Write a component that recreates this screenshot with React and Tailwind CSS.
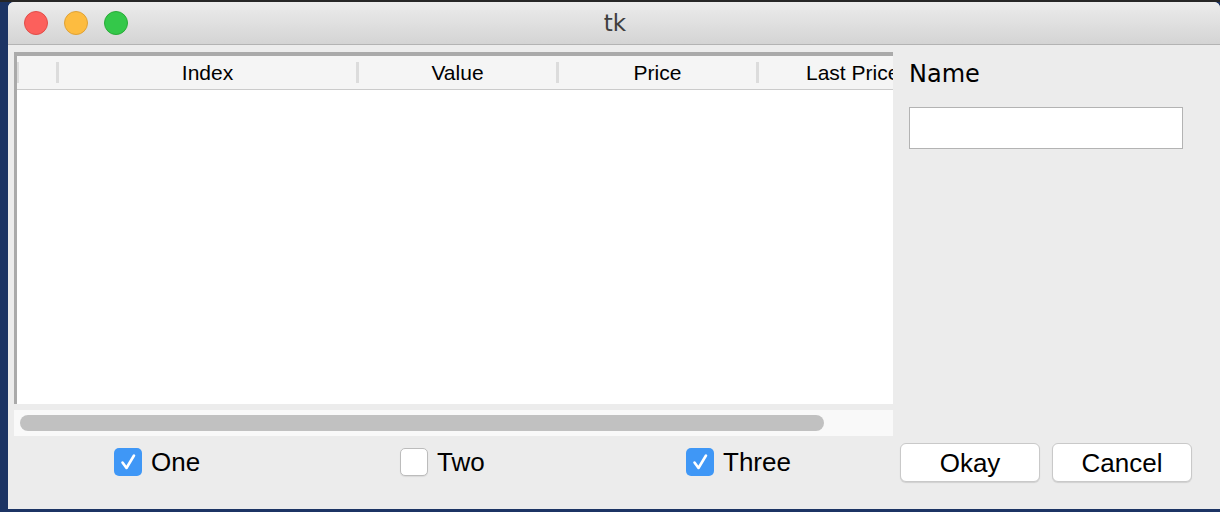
import React from "react";

const sans = { fontFamily: '"Liberation Sans", Arial, sans-serif' };
const lucida = { fontFamily: '"DejaVu Sans", "Liberation Sans", sans-serif' };

function Light({ fill, ring }) {
  return (
    <div
      className="w-[24px] h-[24px] rounded-full border"
      style={{ backgroundColor: fill, borderColor: ring }}
    />
  );
}

function Sep() {
  return <div className="w-[3px] h-[21px] bg-[#dcdcdc] shrink-0" />;
}

function HeaderCell({ width, label }) {
  return (
    <div
      className="shrink-0 h-full flex items-center justify-center text-[21px] text-black whitespace-nowrap"
      style={{ width }}
    >
      {label}
    </div>
  );
}

function Check({ checked, label, last }) {
  return (
    <div className={last ? "shrink-0 flex items-center gap-[9px]" : "w-[286px] shrink-0 flex items-center gap-[9px]"}>
      {checked ? (
        <div className="w-[28px] h-[28px] rounded-[5px] bg-[#3f97f6] flex items-center justify-center">
          <svg width="28" height="28" viewBox="0 0 28 28">
            <path
              d="M8.5 14.5 L12.5 20 L20 7.5"
              fill="none"
              stroke="white"
              strokeWidth="2.6"
              strokeLinecap="round"
              strokeLinejoin="round"
            />
          </svg>
        </div>
      ) : (
        <div className="w-[28px] h-[28px] rounded-[5px] bg-white border border-[#bcbcbc] shadow-[0_1px_1px_rgba(0,0,0,0.08)]" />
      )}
      <span className="text-[26px] text-black leading-none">{label}</span>
    </div>
  );
}

function Button({ label }) {
  return (
    <button className="w-[140px] h-[39px] bg-white rounded-[6px] border border-[#c9c9c9] shadow-[0_1px_1px_rgba(0,0,0,0.12)] text-[26px] text-black leading-none flex items-center justify-center">
      {label}
    </button>
  );
}

export default function App() {
  return (
    <div className="w-[1220px] h-[512px] bg-[#1c3464] flex flex-col overflow-hidden" style={sans}>
      <div className="h-[2px] bg-[#262626] shrink-0" />
      <div className="ml-[8px] h-[507px] flex flex-col bg-[#ececec] rounded-t-[6px] overflow-hidden">
        {/* title bar */}
        <div className="h-[43px] shrink-0 relative flex items-center bg-gradient-to-b from-[#ececec] to-[#d4d4d4] border-b border-[#b3b3b3]">
          <div className="flex items-center gap-[16px] pl-[16px]">
            <Light fill="#fc605c" ring="#e14d48" />
            <Light fill="#fdbc40" ring="#dfa236" />
            <Light fill="#34c84a" ring="#29ab38" />
          </div>
          <div
            className="absolute inset-0 flex items-center justify-center text-[23px] text-[#3f3f3f] pl-[2px]"
            style={lucida}
          >
            tk
          </div>
        </div>

        {/* body */}
        <div className="flex-1 flex">
          {/* left side */}
          <div className="w-[885px] shrink-0 pl-[6px] pt-[7px] flex flex-col">
            <div className="h-[352px] w-[879px] border-t-[4px] border-l-[3px] border-[#aaaaaa] bg-white flex flex-col overflow-hidden">
              <div className="h-[34px] bg-[#f5f5f5] border-b border-[#cbcbcb] flex items-center overflow-hidden shrink-0">
                <div className="w-[2px] h-[21px] bg-[#dcdcdc] shrink-0" />
                <HeaderCell width={37} label="" />
                <Sep />
                <HeaderCell width={297} label="Index" />
                <Sep />
                <HeaderCell width={197} label="Value" />
                <Sep />
                <HeaderCell width={197} label="Price" />
                <Sep />
                <div className="shrink-0 h-full flex items-center pl-[47px] text-[21px] text-black whitespace-nowrap">
                  Last Price
                </div>
              </div>
              <div className="flex-1 bg-white w-[873px]" />
            </div>
            <div className="mt-[6px] h-[26px] w-[879px] bg-[#f9f9f9] flex items-center pl-[6px]">
              <div className="h-[16px] w-[804px] rounded-full bg-[#c1c1c1]" />
            </div>
            <div className="h-[52px] flex items-center pl-[100px]">
              <Check checked label="One" />
              <Check label="Two" />
              <Check checked label="Three" last />
            </div>
          </div>

          {/* right side */}
          <div className="flex-1 flex flex-col pl-[16px]">
            <div className="mt-[15px] h-[28px] leading-[28px] text-[24px] text-black" style={lucida}>
              Name
            </div>
            <div className="mt-[19px] w-[274px] h-[42px] bg-white border border-[#b3b3b3]" />
            <div className="mt-auto mb-[27px] -ml-[9px] flex gap-[12px]">
              <Button label="Okay" />
              <Button label="Cancel" />
            </div>
          </div>
        </div>
      </div>
    </div>
  );
}
